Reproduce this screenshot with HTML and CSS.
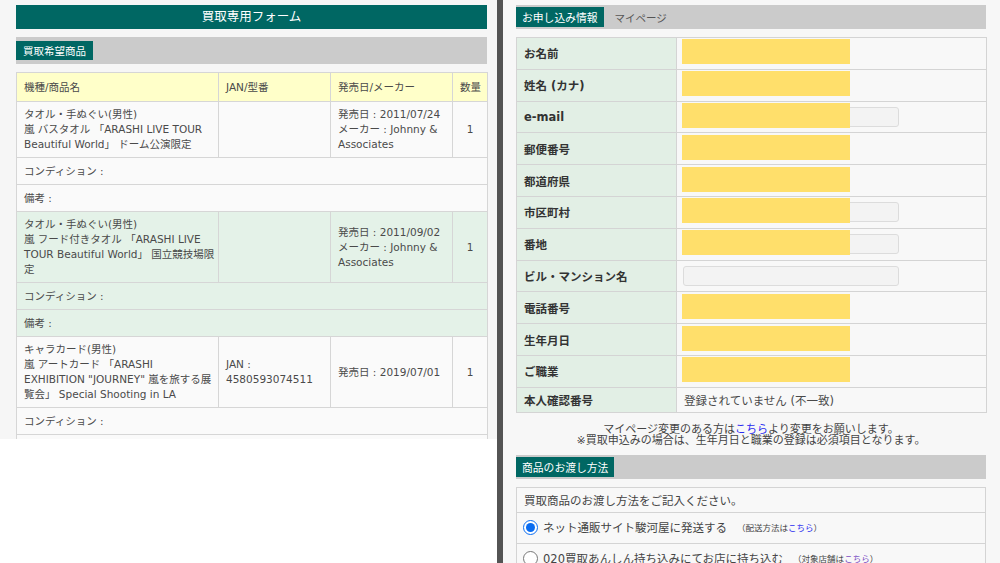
FILE: index.html
```html
<!DOCTYPE html>
<html lang="ja">
<head>
<meta charset="utf-8">
<title>買取専用フォーム</title>
<link rel="stylesheet" href="styles.css">
</head>
<body>
<div class="screen">
  <section class="pane-left">
    <h1 class="title-bar">買取専用フォーム</h1>
    <div class="sec-bar sec-bar-lg"><span class="tag">買取希望商品</span></div>
    <table class="items">
      <colgroup><col class="c1"><col class="c2"><col class="c3"><col class="c4"></colgroup>
      <thead>
        <tr><th>機種/商品名</th><th>JAN/型番</th><th>発売日/メーカー</th><th>数量</th></tr>
      </thead>
      <tbody class="plain">
        <tr class="item">
          <td>タオル・手ぬぐい(男性)<br>嵐 バスタオル 「ARASHI LIVE TOUR<br>Beautiful World」 ドーム公演限定</td>
          <td></td>
          <td>発売日 : 2011/07/24<br>メーカー : Johnny &amp;<br>Associates</td>
          <td class="qty">1</td>
        </tr>
        <tr class="sub"><td colspan="4">コンディション :</td></tr>
        <tr class="sub"><td colspan="4">備考 :</td></tr>
      </tbody>
      <tbody class="tint">
        <tr class="item">
          <td>タオル・手ぬぐい(男性)<br>嵐 フード付きタオル 「ARASHI LIVE<br>TOUR Beautiful World」 国立競技場限<br>定</td>
          <td></td>
          <td>発売日 : 2011/09/02<br>メーカー : Johnny &amp;<br>Associates</td>
          <td class="qty">1</td>
        </tr>
        <tr class="sub"><td colspan="4">コンディション :</td></tr>
        <tr class="sub"><td colspan="4">備考 :</td></tr>
      </tbody>
      <tbody class="plain">
        <tr class="item">
          <td>キャラカード(男性)<br>嵐 アートカード 「ARASHI<br>EXHIBITION &quot;JOURNEY&quot; 嵐を旅する展<br>覧会」 Special Shooting in LA</td>
          <td>JAN :<br>4580593074511</td>
          <td>発売日 : 2019/07/01</td>
          <td class="qty">1</td>
        </tr>
        <tr class="sub"><td colspan="4">コンディション :</td></tr>
        <tr class="sub"><td colspan="4">備考 :</td></tr>
      </tbody>
    </table>
  </section>

  <div class="divider"></div>

  <section class="pane-right">
    <div class="sec-bar sec-bar-sm">
      <span class="tag">お申し込み情報</span>
      <span class="tab-link">マイページ</span>
    </div>

    <table class="profile">
      <colgroup><col class="lab"><col class="val"></colgroup>
      <tr><th><div class="cell">お名前</div></th><td><div class="cell"><div class="field"><span class="redact"></span></div></div></td></tr>
      <tr><th><div class="cell">姓名 (カナ)</div></th><td><div class="cell"><div class="field"><span class="redact"></span></div></div></td></tr>
      <tr><th><div class="cell">e-mail</div></th><td><div class="cell"><div class="field"><span class="input"></span><span class="redact"></span></div></div></td></tr>
      <tr><th><div class="cell">郵便番号</div></th><td><div class="cell"><div class="field"><span class="redact"></span></div></div></td></tr>
      <tr><th><div class="cell">都道府県</div></th><td><div class="cell"><div class="field"><span class="redact"></span></div></div></td></tr>
      <tr><th><div class="cell">市区町村</div></th><td><div class="cell"><div class="field"><span class="input"></span><span class="redact"></span></div></div></td></tr>
      <tr><th><div class="cell">番地</div></th><td><div class="cell"><div class="field"><span class="input"></span><span class="redact"></span></div></div></td></tr>
      <tr><th><div class="cell">ビル・マンション名</div></th><td><div class="cell"><div class="field"><span class="input"></span></div></div></td></tr>
      <tr><th><div class="cell">電話番号</div></th><td><div class="cell"><div class="field"><span class="redact"></span></div></div></td></tr>
      <tr><th><div class="cell">生年月日</div></th><td><div class="cell"><div class="field"><span class="redact"></span></div></div></td></tr>
      <tr><th><div class="cell">ご職業</div></th><td><div class="cell"><div class="field"><span class="redact"></span></div></div></td></tr>
      <tr class="short"><th><div class="cell">本人確認番号</div></th><td><div class="cell text">登録されていません (不一致)</div></td></tr>
    </table>

    <p class="notes">マイページ変更のある方は<a class="link" href="#">こちら</a>より変更をお願いします。<br>※買取申込みの場合は、生年月日と職業の登録は必須項目となります。</p>

    <div class="sec-bar sec-bar-sm"><span class="tag">商品のお渡し方法</span></div>

    <div class="delivery">
      <div class="d-row d-head">買取商品のお渡し方法をご記入ください。</div>
      <label class="d-row d-opt"><input type="radio" name="hand" checked><span>ネット通販サイト駿河屋に発送する</span><small>（配送方法は<a class="link" href="#">こちら</a>）</small></label>
      <label class="d-row d-opt"><input type="radio" name="hand"><span>020買取あんしん持ち込みにてお店に持ち込む</span><small>（対象店舗は<a class="link visited" href="#">こちら</a>）</small></label>
    </div>
  </section>
</div>
</body>
</html>
```

FILE: styles.css
```css
* { box-sizing: border-box; }

html, body {
  margin: 0;
  padding: 0;
  background: #ffffff;
}

body {
  width: 1000px;
  height: 563px;
  overflow: hidden;
  font-family: "DejaVu Sans", "Noto Sans CJK JP", sans-serif;
  color: #444;
}

.screen {
  display: flex;
  align-items: flex-start;
  width: 1000px;
  height: 563px;
}

/* ---------- left pane ---------- */
.pane-left {
  width: 497px;
  height: 439px;
  flex-shrink: 0;
  overflow: hidden;
  background: #f6f6f6;
  padding: 5px 10px 0 16px;
}

.title-bar {
  margin: 0;
  height: 24px;
  line-height: 24px;
  background: #006763;
  color: #fff;
  font-size: 12.5px;
  font-weight: normal;
  text-align: center;
}

.sec-bar {
  display: flex;
  align-items: center;
  background: #cbcbcb;
}

.sec-bar-lg {
  margin-top: 8px;
  height: 27px;
}

.sec-bar-lg .tag {
  height: 19px;
  padding: 0 7px;
  font-size: 10.5px;
}

.tag {
  display: flex;
  align-items: center;
  background: #006763;
  color: #fff;
  white-space: nowrap;
}

.items {
  margin-top: 8px;
  width: 471px;
  border-collapse: collapse;
  table-layout: fixed;
  font-size: 10.5px;
  line-height: 15px;
  color: #4a4a4a;
}

.items .c1 { width: 202px; }
.items .c2 { width: 112px; }
.items .c3 { width: 122px; }
.items .c4 { width: 35px; }

.items th,
.items td {
  border: 1px solid #d6d6d6;
  vertical-align: middle;
  text-align: left;
  white-space: nowrap;
}

.items th {
  background: #ffffc9;
  font-weight: normal;
  padding: 7px 7px 6px;
}

.items td {
  padding: 5px 7px;
}

.items .sub td {
  padding: 6px 7px 5px;
}

.items .qty {
  text-align: center;
  padding-left: 0;
  padding-right: 0;
}

.items .plain td { background: #fafafa; }
.items .tint td { background: #e4f2e8; }

/* ---------- divider ---------- */
.divider {
  width: 6px;
  height: 563px;
  flex-shrink: 0;
  background: #545454;
}

/* ---------- right pane ---------- */
.pane-right {
  flex: 1;
  height: 563px;
  overflow: hidden;
  background: #f7f7f7;
  padding: 5px 14px 0 13px;
}

.sec-bar-sm {
  height: 24px;
}

.sec-bar-sm .tag {
  height: 20px;
  padding: 0 6px;
  font-size: 10.8px;
}

.tab-link {
  margin-left: 11px;
  font-size: 10.5px;
  color: #555;
}

.profile {
  margin-top: 8px;
  width: 470px;
  border-collapse: collapse;
  table-layout: fixed;
}

.profile .lab { width: 160px; }
.profile .val { width: 310px; }

.profile th,
.profile td {
  padding: 0;
  border: 1px solid #d4d4d4;
}

.profile th {
  background: #e2efe5;
  text-align: left;
  font-size: 11.5px;
  font-weight: bold;
  color: #333;
}

.profile td {
  background: #f8f8f8;
}

.profile .cell {
  height: 30.8px;
  display: flex;
  align-items: center;
}

.profile th .cell {
  padding: 0 7px;
}

.profile td .cell {
  padding: 0 6px;
}

.profile .short .cell {
  height: 24px;
}

.profile .cell.text {
  padding-left: 7px;
  font-size: 11.5px;
  color: #4a4a4a;
}

.field {
  position: relative;
  width: 216px;
  height: 20px;
}

.input {
  display: block;
  width: 216px;
  height: 20px;
  background: #f3f3f3;
  border: 1px solid #dcdcdc;
  border-radius: 3px;
}

.redact {
  position: absolute;
  left: -1px;
  top: -4px;
  width: 168px;
  height: 25px;
  background: #ffdf6b;
}

.notes {
  margin: 11px 0 8px;
  text-align: center;
  font-size: 11px;
  line-height: 11.5px;
  color: #444;
}

.link {
  color: #2b2bf0;
  text-decoration: none;
}

.link.visited {
  color: #7a4cc4;
}

.delivery {
  margin-top: 8px;
  border: 1px solid #d4d4d4;
  border-bottom: none;
  background: #f8f8f8;
}

.d-row {
  display: flex;
  align-items: center;
  border-bottom: 1px solid #d4d4d4;
  font-size: 11.5px;
  color: #444;
}

.d-head {
  height: 25px;
  padding: 0 7px;
}

.d-opt {
  height: 31px;
  padding: 0 6px 1px;
}

.d-opt input {
  width: 15px;
  height: 15px;
  margin: 0 5px 0 0;
  accent-color: #0a6cf0;
}

.d-opt small {
  margin-left: 10px;
  font-size: 8.5px;
  color: #444;
}
```
